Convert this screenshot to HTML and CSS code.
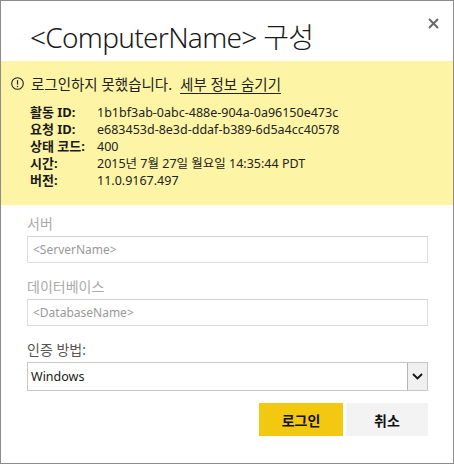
FILE: index.html
```html
<!DOCTYPE html>
<html lang="ko">
<head>
<meta charset="utf-8">
<link rel="stylesheet" href="styles.css">
</head>
<body>
<div class="dialog">
  <div class="header">
    <h1 class="title">&lt;ComputerName&gt; 구성</h1>
    <button class="close" aria-label="닫기">
      <svg width="11" height="11" viewBox="0 0 11 11"><path d="M1 1L10 10M10 1L1 10" stroke="#6b6b6b" stroke-width="2"/></svg>
    </button>
  </div>
  <div class="alert">
    <div class="alert-head">
      <svg class="warn" width="13" height="13" viewBox="0 0 13 13"><circle cx="6.5" cy="6.5" r="5.8" fill="none" stroke="#222" stroke-width="1.1"/><path d="M6.5 3.2V7.6" stroke="#222" stroke-width="1.2"/><circle cx="6.5" cy="9.4" r="0.75" fill="#222"/></svg>
      <span class="msg">로그인하지 못했습니다.</span>
      <a class="link" href="#">세부 정보 숨기기</a>
    </div>
    <div class="details">
      <div class="k">활동 ID:</div><div class="v">1b1bf3ab-0abc-488e-904a-0a96150e473c</div>
      <div class="k">요청 ID:</div><div class="v">e683453d-8e3d-ddaf-b389-6d5a4cc40578</div>
      <div class="k">상태 코드:</div><div class="v">400</div>
      <div class="k">시간:</div><div class="v">2015년 7월 27일 월요일 14:35:44 PDT</div>
      <div class="k">버전:</div><div class="v">11.0.9167.497</div>
    </div>
  </div>
  <div class="form">
    <div class="field">
      <div class="label disabled">서버</div>
      <div class="input">&lt;ServerName&gt;</div>
    </div>
    <div class="field">
      <div class="label disabled">데이터베이스</div>
      <div class="input">&lt;DatabaseName&gt;</div>
    </div>
    <div class="field">
      <div class="label">인증 방법:</div>
      <div class="select">
        <span class="select-value">Windows</span>
        <span class="select-btn"><svg width="11" height="7" viewBox="0 0 11 7"><path d="M1 1L5.5 5.5L10 1" fill="none" stroke="#111" stroke-width="1.8"/></svg></span>
      </div>
    </div>
    <div class="actions">
      <button class="btn primary">로그인</button>
      <button class="btn secondary">취소</button>
    </div>
  </div>
</div>
</body>
</html>
```
FILE: styles.css
```css
* { box-sizing: border-box; }
html, body { margin: 0; padding: 0; background: #fff; }
body {
  font-family: "Noto Sans", "Noto Sans CJK KR", sans-serif;
  color: #222;
}
.dialog {
  width: 454px;
  height: 464px;
  border: 1px solid #8c8c8c;
  position: relative;
  display: flex;
  flex-direction: column;
}
.header {
  height: 60px;
  padding-left: 29px;
  display: flex;
  align-items: center;
}
.title {
  margin: 0;
  font-size: 28px;
  font-weight: 300;
  color: #1a1a1a;
  letter-spacing: -0.7px;
  line-height: 1;
  padding-top: 12px;
}
.close {
  position: absolute;
  top: 16px;
  right: 13px;
  border: 0;
  background: none;
  padding: 0;
  width: 13px;
  height: 13px;
  display: flex;
  align-items: center;
  justify-content: center;
}
.alert {
  height: 144px;
  background: #fdf5a5;
  padding: 12px 10px 0 10px;
  font-size: 13px;
}
.alert-head {
  display: flex;
  align-items: center;
  height: 20px;
}
.warn { margin-right: 7px; flex: none; }
.msg { color: #222; font-size: 14.5px; }
.link {
  margin-left: 8px;
  color: #222;
  font-size: 14.5px;
  text-decoration: underline;
  text-underline-offset: 3px;
}
.details {
  margin-top: 11px;
  padding-left: 19px;
  display: grid;
  grid-template-columns: 67px auto;
  grid-auto-rows: 17px;
  align-items: center;
  line-height: 17px;
}
.k { font-weight: 700; color: #1a1a1a; }
.v { color: #222; font-size: 12.5px; }
.form {
  padding: 8px 25px 0 26px;
  font-size: 13px;
}
.field { margin-bottom: 13px; }
.label {
  height: 22px;
  line-height: 22px;
  margin-bottom: 1px;
  color: #555;
  font-size: 14px;
}
.label.disabled { color: #aaa; }
.input {
  height: 27px;
  border: 1px solid #dcdcdc;
  border-top-color: #d2d2d2;
  padding-left: 5px;
  line-height: 25px;
  color: #999;
  font-size: 12px;
}
.select {
  height: 29px;
  border: 1px solid #c6c6c6;
  display: flex;
  align-items: center;
  color: #1a1a1a;
}
.select-value { flex: 1; padding-left: 3px; font-size: 12.5px; }
.select-btn {
  width: 20px;
  height: 27px;
  border-left: 1px solid #b5b5b5;
  background: #f0f0f0;
  display: flex;
  align-items: center;
  justify-content: center;
}
.actions {
  margin-top: -1px;
  display: flex;
  justify-content: flex-end;
  gap: 3px;
}
.btn {
  height: 33px;
  border: 0;
  font-family: "Noto Sans CJK KR", sans-serif;
  font-size: 14px;
  font-weight: 700;
  color: #111;
}
.primary { width: 84px; background: #f2c811; }
.secondary { width: 82px; background: #f3f3f3; }
```
